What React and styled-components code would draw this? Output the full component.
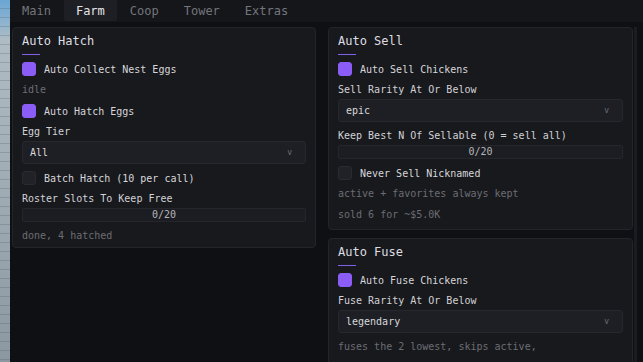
import React from 'react';
import styled, { createGlobalStyle } from 'styled-components';

const Global = createGlobalStyle`
  html, body { margin: 0; padding: 0; background: #0f1013; }
  body { font-family: "DejaVu Sans Mono", "Liberation Mono", monospace; }
  #root { width: 643px; height: 362px; overflow: hidden; }
`;

const Screen = styled.div`
  display: flex;
  width: 643px;
  height: 362px;
  overflow: hidden;
`;

const Backdrop = styled.div`
  width: 10px;
  flex: none;
  background:
    repeating-linear-gradient(to bottom, transparent 0 8px, rgba(70, 85, 95, 0.25) 8px 9px),
    linear-gradient(to bottom, #6aa6d4 0, #8db3cf 22px, #b0bcc4 40px, #a3afb7 160px, #8b98a1 362px);
`;

const Window = styled.div`
  flex: 1;
  min-width: 0;
  display: flex;
  flex-direction: column;
  background: #0f1013;
`;

const TabBar = styled.div`
  height: 22px;
  flex: none;
  display: flex;
  gap: 1px;
  background: #15161a;
`;

const Tab = styled.div`
  height: 21px;
  padding: 0 12px;
  display: flex;
  align-items: center;
  font-size: 12px;
  color: ${p => (p.$active ? '#e4e4e8' : '#74757b')};
  background: ${p => (p.$active ? '#1e1f24' : 'transparent')};
  border-radius: 0 0 2px 2px;
`;

const Body = styled.div`
  flex: 1;
  min-height: 0;
  display: flex;
  align-items: flex-start;
  padding: 5px 0 0 2px;
`;

const Columns = styled.div`
  display: grid;
  grid-template-columns: 304px 305px;
  column-gap: 12px;
  align-items: start;
`;

const Column = styled.div`
  display: flex;
  flex-direction: column;
  gap: 8px;
`;

const ScrollTrack = styled.div`
  width: 3px;
  margin-left: 1px;
  align-self: stretch;
  background: #1b1c21;
`;

const Card = styled.section`
  background: #18191d;
  border: 1px solid #24252a;
  border-radius: 4px;
  padding: 6px 9px ${p => p.$padBottom || 5}px;
  display: flex;
  flex-direction: column;
`;

const Title = styled.div`
  font-size: 12px;
  line-height: 15px;
  color: #dedee2;
`;

const Accent = styled.div`
  width: 18px;
  height: 1px;
  background: #8360ea;
  margin: 5px 0 7px;
`;

const Stack = styled.div`
  display: flex;
  flex-direction: column;
  gap: 7px;
`;

const CheckRow = styled.div`
  display: flex;
  align-items: center;
  gap: 8px;
  height: 14px;
  font-size: 10px;
  color: #d6d6da;
`;

const Box = styled.span`
  width: 14px;
  height: 14px;
  box-sizing: border-box;
  border-radius: 3px;
  flex: none;
  background: ${p => (p.$on ? '#8b5cf6' : '#212227')};
  border: 1px solid ${p => (p.$on ? '#8b5cf6' : '#2a2b30')};
`;

const Muted = styled.div`
  font-size: 10px;
  line-height: 14px;
  color: #6c6d73;
`;

const Field = styled.div`
  display: flex;
  flex-direction: column;
  gap: 2px;
`;

const Label = styled.div`
  font-size: 10px;
  line-height: 14px;
  color: #d2d2d6;
`;

const Select = styled.div`
  height: 23px;
  box-sizing: border-box;
  border: 1px solid #27282d;
  background: #1e1f24;
  border-radius: 3px;
  display: flex;
  align-items: center;
  justify-content: space-between;
  padding: 0 13px 0 7px;
  font-size: 10px;
  color: #d8d8dc;
`;

const Chevron = styled.span`
  font-size: 8px;
  color: #6f7076;
`;

const Slider = styled.div`
  height: 14px;
  box-sizing: border-box;
  border: 1px solid #25262b;
  background: #1c1d22;
  border-radius: 2px;
  display: flex;
  align-items: center;
  justify-content: center;
  font-size: 10px;
  line-height: 1;
  color: #b4b5ba;
`;

const tabs = ['Main', 'Farm', 'Coop', 'Tower', 'Extras'];

function Item({ item }) {
  switch (item.type) {
    case 'check':
      return (
        <CheckRow>
          <Box $on={item.on} />
          <span>{item.text}</span>
        </CheckRow>
      );
    case 'muted':
      return <Muted>{item.text}</Muted>;
    case 'select':
      return (
        <Field>
          <Label>{item.label}</Label>
          <Select>
            <span>{item.value}</span>
            <Chevron>v</Chevron>
          </Select>
        </Field>
      );
    case 'slider':
      return (
        <Field>
          <Label>{item.label}</Label>
          <Slider>{item.value}</Slider>
        </Field>
      );
    default:
      return null;
  }
}

function Panel({ title, items, padBottom }) {
  return (
    <Card $padBottom={padBottom}>
      <Title>{title}</Title>
      <Accent />
      <Stack>
        {items.map((it, i) => (
          <Item key={i} item={it} />
        ))}
      </Stack>
    </Card>
  );
}

const hatch = [
  { type: 'check', on: true, text: 'Auto Collect Nest Eggs' },
  { type: 'muted', text: 'idle' },
  { type: 'check', on: true, text: 'Auto Hatch Eggs' },
  { type: 'select', label: 'Egg Tier', value: 'All' },
  { type: 'check', on: false, text: 'Batch Hatch (10 per call)' },
  { type: 'slider', label: 'Roster Slots To Keep Free', value: '0/20' },
  { type: 'muted', text: 'done, 4 hatched' },
];

const sell = [
  { type: 'check', on: true, text: 'Auto Sell Chickens' },
  { type: 'select', label: 'Sell Rarity At Or Below', value: 'epic' },
  { type: 'slider', label: 'Keep Best N Of Sellable (0 = sell all)', value: '0/20' },
  { type: 'check', on: false, text: 'Never Sell Nicknamed' },
  { type: 'muted', text: 'active + favorites always kept' },
  { type: 'muted', text: 'sold 6 for ~$5.0K' },
];

const fuse = [
  { type: 'check', on: true, text: 'Auto Fuse Chickens' },
  { type: 'select', label: 'Fuse Rarity At Or Below', value: 'legendary' },
  { type: 'muted', text: 'fuses the 2 lowest, skips active,' },
];

export default function App() {
  return (
    <>
      <Global />
      <Screen>
        <Backdrop />
        <Window>
          <TabBar>
            {tabs.map(t => (
              <Tab key={t} $active={t === 'Farm'}>
                {t}
              </Tab>
            ))}
          </TabBar>
          <Body>
            <Columns>
              <Column>
                <Panel title="Auto Hatch" items={hatch} padBottom={4} />
              </Column>
              <Column>
                <Panel title="Auto Sell" items={sell} padBottom={7} />
                <Panel title="Auto Fuse" items={fuse} padBottom={20} />
              </Column>
            </Columns>
            <ScrollTrack />
          </Body>
        </Window>
      </Screen>
    </>
  );
}
